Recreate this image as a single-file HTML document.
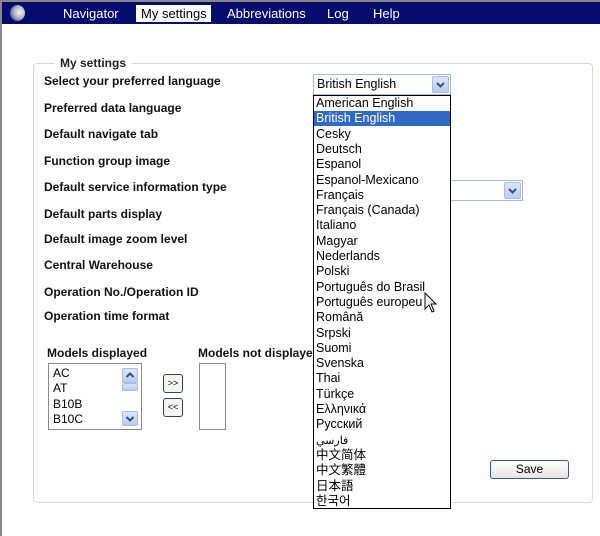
<!DOCTYPE html>
<html><head><style>
body{margin:0;width:600px;height:536px;background:#fff;position:relative;overflow:hidden;font-family:"Liberation Sans",Arial,sans-serif;}
.a{position:absolute}
.nav{left:2px;top:2px;width:598px;height:22px;background:#050c6e;}
.nav span{position:absolute;top:4px;color:#fff;font-size:13px}
.lbl{position:absolute;left:44px;font-size:12px;font-weight:bold;color:#111}
.li{position:absolute;left:316px;font-size:12.5px;color:#000;height:15.3px;line-height:15px}
.arr{position:absolute;background:linear-gradient(#dde6f8,#b9cbef);border:1px solid #a9bde6;border-radius:2px}
.arr svg{position:absolute;left:0;top:0}
</style></head><body>
<div class="a" style="left:0;top:0;width:2px;height:536px;background:#8a8a82"></div>
<div class="a" style="left:0;top:0;width:600px;height:2px;background:#8a8a82"></div>
<div class="a nav">
<div class="a" style="left:8px;top:3px;width:15px;height:16px;border-radius:50%;background:radial-gradient(circle at 65% 45%,#f4f4f4,#b0b4c0 45%,#3a3f9a 85%)"></div>
<span style="left:61px">Navigator</span>
<div class="a" style="left:134px;top:3px;width:75px;height:17px;background:#fff"></div>
<span style="left:139px;color:#000">My settings</span>
<span style="left:225px">Abbreviations</span>
<span style="left:325px">Log</span>
<span style="left:371px">Help</span>
</div>
<div class="a" style="left:33px;top:63px;width:558px;height:438px;border:1px solid #d8d8d0;border-radius:4px"></div>
<div class="a" style="left:54px;top:56px;padding:0 6px;background:#fff;font-size:12px;font-weight:bold;color:#222">My settings</div>
<div class="lbl" style="top:74px">Select your preferred language</div>
<div class="lbl" style="top:101px">Preferred data language</div>
<div class="lbl" style="top:127px">Default navigate tab</div>
<div class="lbl" style="top:154px">Function group image</div>
<div class="lbl" style="top:180px">Default service information type</div>
<div class="lbl" style="top:207px">Default parts display</div>
<div class="lbl" style="top:232px">Default image zoom level</div>
<div class="lbl" style="top:258px">Central Warehouse</div>
<div class="lbl" style="top:285px">Operation No./Operation ID</div>
<div class="lbl" style="top:309px">Operation time format</div>
<div class="a" style="left:313px;top:74px;width:136px;height:19px;border:1px solid #a8b8d8;background:#fff"></div>
<div class="a" style="left:317px;top:77px;font-size:12.5px">British English</div>
<div class="arr" style="left:432px;top:76px;width:15px;height:15px"><svg width="15" height="15"><path d="M4 6 L7.5 9.5 L11 6" fill="none" stroke="#3a4e7a" stroke-width="2"/></svg></div>
<div class="a" style="left:440px;top:180px;width:81px;height:19px;border:1px solid #a8b8d8;background:#fff"></div>
<div class="arr" style="left:504px;top:182px;width:15px;height:15px"><svg width="15" height="15"><path d="M4 6 L7.5 9.5 L11 6" fill="none" stroke="#3a4e7a" stroke-width="2"/></svg></div>
<div class="lbl" style="left:47px;top:346px">Models displayed</div>
<div class="lbl" style="left:198px;top:346px">Models not displayed</div>
<div class="a" style="left:48px;top:363px;width:92px;height:65px;border:1px solid #889;background:#fff"></div>
<div class="a" style="left:53px;top:366px;font-size:12px;line-height:15.3px">AC<br>AT<br>B10B<br>B10C</div>
<div class="arr" style="left:122px;top:368px;width:14px;height:13px"><svg width="14" height="13"><path d="M3.5 8 L7 4.5 L10.5 8" fill="none" stroke="#3a4e7a" stroke-width="2"/></svg></div>
<div class="arr" style="left:122px;top:383px;width:14px;height:6px"></div>
<div class="arr" style="left:122px;top:411px;width:14px;height:13px"><svg width="14" height="13"><path d="M3.5 5 L7 8.5 L10.5 5" fill="none" stroke="#3a4e7a" stroke-width="2"/></svg></div>
<div class="a" style="left:163px;top:374px;width:18px;height:17px;border:1px solid #345;border-radius:3px;font-size:9px;text-align:center;line-height:17px;background:#f4f4f0">&gt;&gt;</div>
<div class="a" style="left:163px;top:398px;width:18px;height:17px;border:1px solid #345;border-radius:3px;font-size:9px;text-align:center;line-height:17px;background:#f4f4f0">&lt;&lt;</div>
<div class="a" style="left:199px;top:363px;width:25px;height:65px;border:1px solid #889;background:#fff"></div>
<div class="a" style="left:490px;top:460px;width:77px;height:17px;border:1px solid #3a5a8a;border-radius:3px;background:linear-gradient(#fff,#e6e6e0);font-size:12px;text-align:center;line-height:17px">Save</div>
<div class="a" style="left:313px;top:95px;width:136px;height:412px;border:1px solid #000;background:#fff"></div>
<div class="a" style="left:314px;top:111px;width:136px;height:15px;background:#316ac5"></div>
<div class="li" style="top:96px">American English</div>
<div class="li" style="top:111.3px;color:#fff">British English</div>
<div class="li" style="top:126.6px">Cesky</div>
<div class="li" style="top:141.9px">Deutsch</div>
<div class="li" style="top:157.2px">Espanol</div>
<div class="li" style="top:172.5px">Espanol-Mexicano</div>
<div class="li" style="top:187.8px">Français</div>
<div class="li" style="top:203.1px">Français (Canada)</div>
<div class="li" style="top:218.4px">Italiano</div>
<div class="li" style="top:233.7px">Magyar</div>
<div class="li" style="top:249px">Nederlands</div>
<div class="li" style="top:264.3px">Polski</div>
<div class="li" style="top:279.6px">Português do Brasil</div>
<div class="li" style="top:294.9px">Português europeu</div>
<div class="li" style="top:310.2px">Română</div>
<div class="li" style="top:325.5px">Srpski</div>
<div class="li" style="top:340.8px">Suomi</div>
<div class="li" style="top:356.1px">Svenska</div>
<div class="li" style="top:371.4px">Thai</div>
<div class="li" style="top:386.7px">Türkçe</div>
<div class="li" style="top:402px">Ελληνικά</div>
<div class="li" style="top:417.3px">Русский</div>
<div class="li" style="top:432.6px;font-family:'DejaVu Sans',sans-serif;font-size:11px">فارسي</div>
<div class="li" style="top:447.9px;font-family:'Liberation Sans','Noto Sans CJK SC',sans-serif">中文简体</div>
<div class="li" style="top:463.2px;font-family:'Liberation Sans','Noto Sans CJK TC',sans-serif">中文繁體</div>
<div class="li" style="top:478.5px;font-family:'Liberation Sans','Noto Sans CJK JP',sans-serif">日本語</div>
<div class="li" style="top:493.8px;font-family:'Liberation Sans','Noto Sans CJK KR',sans-serif">한국어</div>
<svg class="a" style="left:424px;top:292px" width="14" height="22" viewBox="0 0 14 22"><path d="M1 1 L1 17 L5 13 L8 20 L10 19 L7 12 L12 12 Z" fill="#fff" stroke="#000" stroke-width="1"/></svg>
</body></html>
